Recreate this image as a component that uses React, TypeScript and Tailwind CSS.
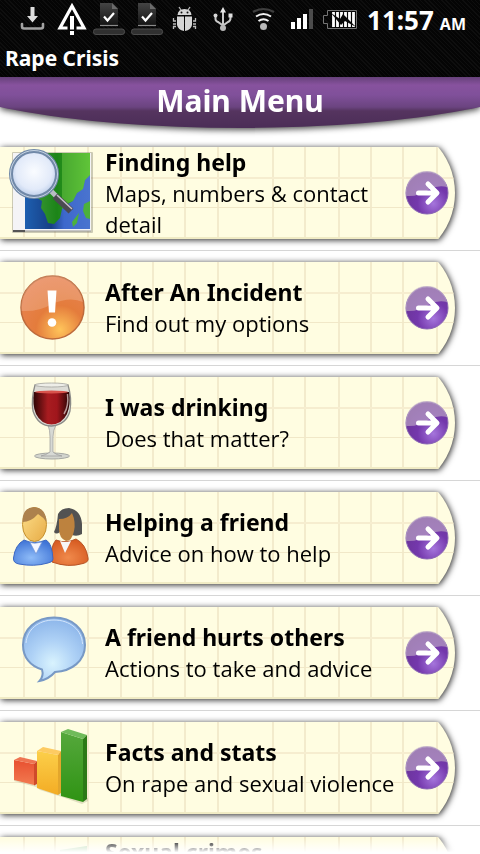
import type { ReactNode } from 'react';

type Item = {
  id: string;
  title: string;
  detail: string;
  icon: ReactNode;
  tall?: boolean;
};

function StatusIcon({ label, children }: { label: string; children: ReactNode }) {
  return (
    <svg role="img" aria-label={label} viewBox="0 0 32 38" className="h-[38px] w-8 shrink-0 overflow-visible">
      {children}
    </svg>
  );
}

function DocumentIcon() {
  return (
    <StatusIcon label="Installed">
      <path d="M7 3 H19 L25 9 V25 H7 Z" fill="url(#docFill)" />
      <path d="M19 3 L25 9 H19 Z" fill="#6a6a6a" />
      <path d="M11 16.500 L14.500 20.500 L21 13" fill="none" stroke="#fff" strokeWidth="2.200" />
      <path d="M7 25.500 H25" stroke="#8a8a8a" strokeWidth="1.200" />
      <rect x="0.500" y="29" width="31" height="5.500" rx="2.500" fill="#303030" stroke="#4c4c4c" />
    </StatusIcon>
  );
}

function StatusBar() {
  return (
    <div className="flex h-[38px] items-center gap-1.5 overflow-hidden pr-3.5 pl-[17px]">
      <StatusIcon label="Download">
        <path d="M5 24 V26.500 Q5 28.500 7 28.500 H24 Q26 28.500 26 26.500 V24" fill="none" stroke="#a2a2a2" strokeWidth="2.600" strokeLinecap="round" />
        <path d="M13.500 7 H17.500 V16 H21 L15.500 22.500 L10 16 H13.500 Z" fill="#dedede" />
      </StatusIcon>
      <StatusIcon label="Alert">
        <path d="M17 6 L29 28 H5 Z" fill="none" stroke="#fff" strokeWidth="3.200" />
        <rect x="12.500" y="26" width="9" height="10" fill="#080808" />
        <rect x="15" y="16" width="4" height="13.500" fill="#fff" />
        <rect x="15" y="31" width="4" height="4" fill="#fff" />
      </StatusIcon>
      <DocumentIcon />
      <DocumentIcon />
      <StatusIcon label="USB debugging">
        <g fill="#d6d6d6">
          <path d="M8.500 15 Q9 9 15.500 9 Q22 9 22.500 15 Z" />
          <path d="M8 16.500 H15 V31 Q9 30 8 25 Z" />
          <path d="M16 16.500 H23 V25 Q22 30 16 31 Z" />
        </g>
        <g fill="none" stroke="#bcbcbc" strokeWidth="1.300">
          <path d="M10 7 L12 10 M21 7 L19 10" />
          <path d="M7 21 H4.500 V18 M7 24 H4 M7 26.500 H4.500 V29 M24 21 H26.500 V18 M24 24 H27 M24 26.500 H26.500 V29" />
        </g>
        <circle cx="12.500" cy="12.500" r="1" fill="#111" />
        <circle cx="18.500" cy="12.500" r="1" fill="#111" />
      </StatusIcon>
      <StatusIcon label="USB">
        <g fill="none" stroke="#c8c8c8" strokeWidth="2">
          <path d="M16 28 V11" />
          <path d="M8.500 16 V19 Q8.500 21 11 22 L16 25.500 L21 22 Q23.500 21 23.500 18 V17" />
        </g>
        <path d="M16 7 L19 12.500 H13 Z" fill="#e8e8e8" />
        <circle cx="8.500" cy="15.500" r="2" fill="#d8d8d8" />
        <rect x="21.500" y="13.500" width="4" height="4" fill="#e0e0e0" />
        <circle cx="16" cy="28" r="3" fill="#b8b8b8" />
      </StatusIcon>
      <StatusIcon label="Wi-Fi">
        <g fill="none">
          <path d="M8 12 Q18.500 6 29 12" stroke="#3e3e3e" strokeWidth="2.200" />
          <path d="M11 16.500 Q18.500 11.500 26 16.500" stroke="#f0f0f0" strokeWidth="2" />
          <path d="M13.500 21 Q18.500 17.500 23.500 21" stroke="#f0f0f0" strokeWidth="2" />
        </g>
        <circle cx="18.500" cy="26.500" r="3.500" fill="#b8b8b8" />
      </StatusIcon>
      <StatusIcon label="Signal">
        <rect x="8" y="22" width="4" height="7" fill="#fff" />
        <rect x="14" y="18" width="4" height="11" fill="#fff" />
        <rect x="20" y="14" width="4" height="15" fill="#fff" />
        <rect x="26" y="9" width="4" height="20" fill="#4c4c4c" />
      </StatusIcon>
      <StatusIcon label="Battery">
        <path d="M6.500 10.500 H35.500 V28.500 H6.500 V23.500 H2.500 V15.500 H6.500 Z" fill="none" stroke="#757575" />
        <path d="M12.500 12 V27 M16.500 12 V27 M20.500 12 V27 M24.500 12 V27 M28.500 12 V27 M32.500 12 V27" stroke="#fff" strokeWidth="2.800" />
        <path d="M10 13 L19 19 L22 14 L35 27 L24 21 L20 25 Z" fill="#080808" />
      </StatusIcon>
      <time className="ml-auto flex shrink-0 items-baseline gap-1.5 pt-1.5 leading-8 font-bold whitespace-nowrap">
        <span className="text-[26px] leading-8">11:57</span>
        <span className="text-base leading-8">AM</span>
      </time>
    </div>
  );
}

function Picture({ children }: { children: ReactNode }) {
  return (
    <svg aria-hidden="true" viewBox="0 0 105 92" className="h-[92px] w-[105px] shrink-0">
      {children}
    </svg>
  );
}

const mapIcon = (
  <Picture>
    <rect x="12" y="5" width="81" height="81" rx="1" fill="#000" opacity=".2" />
    <rect x="13" y="6" width="78" height="78" fill="#f4f4f6" />
    <rect x="25" y="6" width="65" height="76" fill="url(#sea)" />
    <path d="M50 6 H90 V28 L85 33 L83 42 L77 46 L73 54 L66 58 L62 62 L60 71 L54 77 L48 76 L45 67 L41 61 L42 54 L36 50 L30 44 V6 Z" fill="url(#land)" />
    <path d="M79 66 L77 76 L73 80 L72 75 Z M90 54 L84 57 L83 64 L86 71 L90 72 Z" fill="#4cb13c" />
    <path d="M62 6 V62 L68 56 L73 54 L77 46 L83 42 L85 33 L90 28 V6 Z" fill="#8fe05a" opacity=".35" />
    <path d="M13 84 H25" stroke="#555" strokeWidth="2" />
    <path d="M25 84 H91" stroke="#999" strokeWidth="1" />
    <path d="M50 43 L58 51" stroke="#b9bcc4" strokeWidth="5" />
    <path d="M55 49 L71 64" stroke="#4c4a52" strokeWidth="7" />
    <path d="M57 48 L72 62" stroke="#c7c3cc" strokeWidth="1.500" />
    <circle cx="34" cy="27" r="23" fill="url(#lens)" stroke="#7189a8" strokeWidth="4" />
    <circle cx="34" cy="27" r="23.500" fill="none" stroke="#c5d3e2" strokeWidth="1" />
  </Picture>
);

const alertIcon = (
  <Picture>
    <circle cx="52.500" cy="45.500" r="31.500" fill="url(#orange)" stroke="#bd6a3c" strokeWidth="1.500" />
    <path d="M21.500 49 A31 31 0 0 1 83 40 Q70 34 52 42 Q39 50 21.500 49 Z" fill="#fff" opacity=".18" />
    <path d="M47.500 28.500 H56.500 L55 50.500 H49 Z" fill="#fff" />
    <circle cx="52" cy="60.500" r="4.300" fill="#fff" />
  </Picture>
);

const wineIcon = (
  <Picture>
    <ellipse cx="52" cy="79" rx="17.500" ry="3" fill="#d3d5ce" stroke="#a6a8a3" />
    <path d="M48 48 Q50 53 50 60 L50 75 Q46 78 41 79 H62 Q56 78 53 75 L53 60 Q53 53 56 48 Z" fill="#d7d9d4" stroke="#999" strokeWidth=".7" />
    <path d="M35 8 Q31 22 33 34 Q38 49 51.500 49 Q66 48 70 34 Q72 21 68 8 Z" fill="#dcdcd6" stroke="#8b8b88" strokeWidth="1.300" />
    <path d="M34 15 Q32 28 36 37 Q41 47 51.500 47.500 Q62 47 67 37 Q71 27 69 15 Z" fill="url(#wine)" />
    <ellipse cx="51.500" cy="15" rx="16.500" ry="1.500" fill="#d8534c" />
    <ellipse cx="51.500" cy="8" rx="16.500" ry="2" fill="#eeeee8" stroke="#a3a39e" strokeWidth=".8" />
    <path d="M67.500 17 Q69 29 64 37" fill="none" stroke="#e8d6d6" strokeWidth="1.500" opacity=".7" />
  </Picture>
);

const peopleIcon = (
  <Picture>
    <path d="M58 22 Q61 16 69 16 Q81 18 82 32 V42 Q77 45 72 43 L60 40 Q56 43 54 40 Q57 34 58 22 Z" fill="#525252" />
    <path d="M59 27 Q68 27 72 21 Q76 30 74 39 Q72 49 66 49 Q59 46 59 37 Z" fill="#bd823e" />
    <path d="M56 48 Q66 52 76 47 Q86 52 88 66 Q89 70 83 71.500 Q68 76 52 70 Q50 54 56 48 Z" fill="url(#shirtOrange)" stroke="#b65325" />
    <path d="M60 49 L65 61 L71 49 Q65 51 60 49 Z" fill="#f7f7f7" />
    <ellipse cx="34.500" cy="32.500" rx="12" ry="17" fill="url(#face)" stroke="#c59231" />
    <path d="M22.500 30 Q22 16 34 15 Q46 16 46.500 30 Q43 25 38 22 Q31 30 22.500 30 Z" fill="#ad814d" />
    <path d="M24 48 Q34 53 46 48 Q52 51 53 67 Q53 70 48 71 Q34 75 19 72 Q13 71 13.500 66 Q15 53 24 48 Z" fill="url(#shirtBlue)" stroke="#3d68c2" />
    <path d="M30 50.500 L36 62 L42 50 Q35 52 30 50.500 Z" fill="#f5f7ff" stroke="#7195d8" strokeWidth=".8" />
  </Picture>
);

const bubbleIcon = (
  <Picture>
    <path d="M54 10.500 C72 10.500 85 22 85 38 C85 54 72 64 55 65 Q49 72 39.500 74 Q44 69 42 62.500 C30 59 23 50 23 38 C23 22 36 10.500 54 10.500 Z" fill="url(#bubble)" stroke="#7899c5" strokeWidth="2" />
    <path d="M54 13 C70 13 82 23 82.500 37 M26 36 C27 23 38 13 54 13" fill="none" stroke="#d4e6fb" strokeWidth="1" />
  </Picture>
);

const chartIcon = (
  <Picture>
    <path d="M14 59 L36 65 L40 68 L62 75 L82 82 L88 79 V76 L14 56 Z" fill="#8b8b60" opacity=".25" />
    <path d="M14 38 L34 42 V63 L14 58 Z" fill="url(#barRed)" />
    <path d="M14 38 L20 35 L37 39 L34 42 Z" fill="#ee7452" />
    <path d="M34 42 L37 39 V62 L34 63.500 Z" fill="#cf4a2a" />
    <path d="M37 29 L58 33 V73 L37 66 Z" fill="url(#barYellow)" />
    <path d="M37 29 L43 25 L61 29 L58 33 Z" fill="#fdcb62" />
    <path d="M58 33 L61 29 V71 L58 73 Z" fill="#e3a62c" />
    <path d="M61 10 L83 17 V80 L61 74 Z" fill="url(#barGreen)" />
    <path d="M61 10 L68 7 L87 13 L83 17 Z" fill="#70bb5a" />
    <path d="M83 17 L87 13 V77 L83 80 Z" fill="#2c7a17" />
  </Picture>
);

const crimesIcon = (
  <Picture>
    <path d="M60 13 L87 9 V80 H60 Z" fill="#b5d8ac" />
  </Picture>
);

const items: Item[] = [
  { id: 'finding-help', title: 'Finding help', detail: 'Maps, numbers & contact detail', icon: mapIcon },
  { id: 'after-an-incident', title: 'After An Incident', detail: 'Find out my options', icon: alertIcon },
  { id: 'drinking', title: 'I was drinking', detail: 'Does that matter?', icon: wineIcon },
  { id: 'helping', title: 'Helping a friend', detail: 'Advice on how to help', icon: peopleIcon },
  { id: 'friend-hurts-others', title: 'A friend hurts others', detail: 'Actions to take and advice', icon: bubbleIcon },
  { id: 'facts', title: 'Facts and stats', detail: 'On rape and sexual violence', icon: chartIcon },
  { id: 'crimes', title: 'Sexual crimes', detail: '', icon: crimesIcon, tall: true },
];

function Arrow() {
  return (
    <svg aria-hidden="true" viewBox="0 0 44 44" className="mr-1.5 size-11 shrink-0">
      <circle cx="22" cy="22" r="21" fill="url(#purple)" stroke="#8a68b4" />
      <path d="M1.500 25 A20.500 20.500 0 0 1 42 16 Q33 14 25 18 Q13 26 1.500 25 Z" fill="#c4b2c9" opacity=".6" />
      <path d="M13.500 22 H31 M23 13 L32 22 L23 31" fill="none" stroke="#fff" strokeWidth="5" strokeLinecap="round" strokeLinejoin="round" />
    </svg>
  );
}

const ruling = [24, 55, 88, 121, 153, 185, 218, 273, 305, 339, 371, 403, 437];

function Paper() {
  return (
    <div className="absolute inset-x-0 -inset-y-[25px] overflow-hidden rounded-r-[71px] bg-[#fffde1] py-[25px]">
      <svg aria-hidden="true" className="h-full w-full">
        {ruling.map((x) => (
          <rect key={x} x={x - 1} y="0" width="2" height="100%" fill="#f3ebcc" />
        ))}
        <rect x="0" y="30" width="100%" height="2" fill="#f6edcf" />
        <rect x="0" y="60" width="100%" height="1" fill="#f1e8c8" />
        <rect x="0" y="90" width="100%" height="2" fill="#f0ebc4" />
      </svg>
    </div>
  );
}

function MenuRow({ item }: { item: Item }) {
  return (
    <li className="border-b border-[#d6d6d6] py-[11px] pr-[25px]">
      <a href={'#' + item.id} className="block drop-shadow-[1px_1px_3px_rgba(0,0,0,0.85)]">
        <div className="relative overflow-hidden">
          <Paper />
          <div className="relative flex h-[92px] items-center">
            {item.icon}
            <div className={item.tall ? 'min-h-[93px] min-w-0 flex-1' : 'min-w-0 flex-1'}>
              <h2 className="text-[23px] leading-[31px] font-bold">{item.title}</h2>
              <p className="font-['Open_Sans','Noto_Sans',sans-serif] text-[22px] leading-[31px]">{item.detail}</p>
            </div>
            <Arrow />
          </div>
        </div>
      </a>
    </li>
  );
}

function Gradients() {
  return (
    <svg aria-hidden="true" className="absolute size-0">
      <defs>
        <linearGradient id="docFill" x1="0" y1="0" x2="0" y2="1">
          <stop offset="0" stopColor="#444" />
          <stop offset="1" stopColor="#151515" />
        </linearGradient>
        <linearGradient id="sea" x1="0" y1="0" x2="1" y2="0">
          <stop offset="0" stopColor="#1d5fb0" />
          <stop offset=".4" stopColor="#173f86" />
          <stop offset=".6" stopColor="#3d68cc" />
          <stop offset="1" stopColor="#4a74cf" />
        </linearGradient>
        <linearGradient id="land" x1="0" y1="0" x2="1" y2="0">
          <stop offset="0" stopColor="#3f9a3a" />
          <stop offset=".45" stopColor="#1c8418" />
          <stop offset="1" stopColor="#47b628" />
        </linearGradient>
        <radialGradient id="lens" cx=".5" cy=".45" r=".55">
          <stop offset="0" stopColor="#fafcff" />
          <stop offset=".7" stopColor="#e2eaf9" />
          <stop offset="1" stopColor="#b9cbe8" />
        </radialGradient>
        <radialGradient id="orange" cx=".62" cy=".85" r=".85">
          <stop offset="0" stopColor="#ffc45a" />
          <stop offset=".45" stopColor="#e47c3c" />
          <stop offset="1" stopColor="#e88454" />
        </radialGradient>
        <linearGradient id="wine" x1="0" y1="0" x2="1" y2="0">
          <stop offset="0" stopColor="#2d0505" />
          <stop offset=".4" stopColor="#a81c20" />
          <stop offset=".65" stopColor="#a0161c" />
          <stop offset="1" stopColor="#250404" />
        </linearGradient>
        <linearGradient id="face" x1="0" y1="0" x2="1" y2="1">
          <stop offset="0" stopColor="#fde08c" />
          <stop offset="1" stopColor="#e7ab45" />
        </linearGradient>
        <radialGradient id="shirtBlue" cx=".45" cy=".7" r=".7">
          <stop offset="0" stopColor="#8fbcf8" />
          <stop offset="1" stopColor="#3f74d6" />
        </radialGradient>
        <radialGradient id="shirtOrange" cx=".45" cy=".7" r=".7">
          <stop offset="0" stopColor="#f08a4c" />
          <stop offset="1" stopColor="#d65a20" />
        </radialGradient>
        <radialGradient id="bubble" cx=".48" cy=".72" r=".7">
          <stop offset="0" stopColor="#d9f3fe" />
          <stop offset=".5" stopColor="#afd2f6" />
          <stop offset="1" stopColor="#8db6ea" />
        </radialGradient>
        <linearGradient id="barRed" x1="0" y1="0" x2="0" y2="1">
          <stop offset="0" stopColor="#e85030" />
          <stop offset="1" stopColor="#f27a50" />
        </linearGradient>
        <linearGradient id="barYellow" x1="0" y1="0" x2="0" y2="1">
          <stop offset="0" stopColor="#fccf4a" />
          <stop offset="1" stopColor="#f3ac24" />
        </linearGradient>
        <linearGradient id="barGreen" x1="0" y1="0" x2="0" y2="1">
          <stop offset="0" stopColor="#55a83c" />
          <stop offset="1" stopColor="#2f9313" />
        </linearGradient>
        <radialGradient id="purple" cx=".65" cy=".75" r=".75">
          <stop offset="0" stopColor="#a575dc" />
          <stop offset=".5" stopColor="#7438ac" />
          <stop offset="1" stopColor="#6a3398" />
        </radialGradient>
      </defs>
    </svg>
  );
}

export default function App() {
  return (
    <div className="relative flex h-screen flex-col overflow-hidden bg-white font-['Noto_Sans','Open_Sans',sans-serif] text-black">
      <Gradients />
      <div className="shrink-0 bg-[#050505] bg-[repeating-linear-gradient(45deg,#0e0e0e_0px,#0e0e0e_1px,transparent_1px,transparent_3px)] text-white">
        <StatusBar />
        <div className="h-[39px] px-[5px] text-[21px] leading-[40px] font-bold">Rape Crisis</div>
      </div>
      <header className="h-[59px] shrink-0 drop-shadow-[0px_2px_3px_rgba(0,0,0,0.7)]">
        <div className="relative h-[51px] overflow-hidden">
          <div className="absolute -inset-x-20 -top-5 bottom-0 [border-radius:0_0_50%_50%/0_0_62px_62px] bg-[linear-gradient(#66417a_20px,#87529e_28px,#80509a_38px,#6b4480_50px,#55345f_54px,#4b2d57_71px)]" />
          <h1 className="relative text-center text-[30px] leading-[48px] font-bold text-white">Main Menu</h1>
        </div>
      </header>
      <main className="min-h-0 flex-1 overflow-hidden">
        <ul>
          {items.map((item) => (
            <MenuRow key={item.id} item={item} />
          ))}
        </ul>
      </main>
      <div className="pointer-events-none absolute inset-x-0 bottom-0 h-4 bg-linear-to-b from-transparent to-white to-90%" />
    </div>
  );
}
